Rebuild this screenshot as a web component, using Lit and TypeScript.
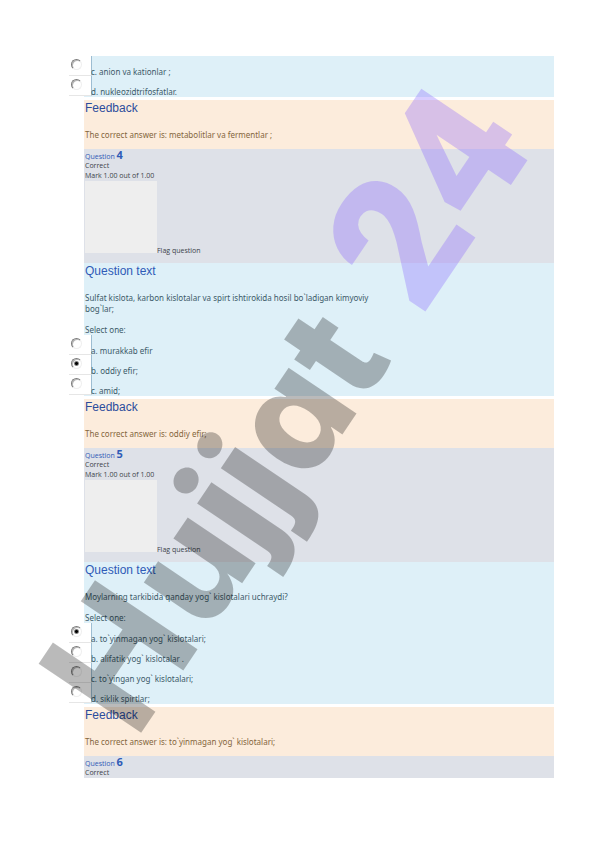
import { LitElement, html, css, nothing } from 'lit';
import { customElement, property } from 'lit/decorators.js';

interface Quiz {
  id: string;
  number?: number;
  text?: string;
  options: string[];
  selected?: number;
  answer?: string;
}

const QUIZ: Quiz[] = [
  {
    id: 'q3',
    options: ['c. anion va kationlar ;', 'd. nukleozidtrifosfatlar.'],
    answer: 'metabolitlar va fermentlar ;',
  },
  {
    id: 'q4',
    number: 4,
    text: 'Sulfat kislota, karbon kislotalar va spirt ishtirokida hosil bo`ladigan kimyoviy bog`lar;',
    options: ['a. murakkab efir', 'b. oddiy efir;', 'c. amid;'],
    selected: 1,
    answer: 'oddiy efir;',
  },
  {
    id: 'q5',
    number: 5,
    text: 'Moylarning tarkibida qanday yog` kislotalari uchraydi?',
    options: [
      'a. to`yinmagan yog` kislotalari;',
      'b. alifatik yog` kislotalar .',
      'c. to`yingan yog` kislotalari;',
      'd. siklik spirtlar;',
    ],
    selected: 0,
    answer: 'to`yinmagan yog` kislotalari;',
  },
  { id: 'q6', number: 6, options: [] },
];

@customElement('quiz-info')
export class QuizInfo extends LitElement {
  @property({ type: Number }) number = 0;
  @property({ type: Boolean }) short = false;

  static styles = css`
    :host {
      display: block;
      background: #dee1e8;
      color: #3c4148;
      font-family: "Open Sans", sans-serif;
      font-size: 7px;
      line-height: 10px;
      padding-left: 1px;
    }
    .title {
      margin: 0;
      height: 12px;
      line-height: 12px;
      font-size: 7px;
      font-weight: normal;
      color: #2f5bb7;
    }
    .number {
      font-size: 11px;
      font-weight: bold;
    }
    .line {
      margin: 0;
    }
    .flag {
      display: flex;
      align-items: flex-end;
      padding-bottom: 10px;
    }
    .picture {
      width: 72px;
      height: 72px;
      background: #eeeeee;
    }
    .flag-text {
      line-height: 5px;
    }
  `;

  render() {
    return html`
      <h3 class="title">Question <span class="number">${this.number}</span></h3>
      <p class="line">Correct</p>
      ${this.short
        ? nothing
        : html`
            <p class="line">Mark 1.00 out of 1.00</p>
            <div class="flag">
              <div class="picture"></div>
              <span class="flag-text">Flag question</span>
            </div>
          `}
    `;
  }
}

@customElement('quiz-question')
export class QuizQuestion extends LitElement {
  @property({ attribute: false }) quiz!: Quiz;

  static styles = css`
    :host {
      display: block;
      background: #def0f8;
      color: #3c5a68;
      padding-bottom: 1px;
    }
    .heading {
      margin: 0 0 13px;
      padding-left: 1px;
      font: 12px/16px "Liberation Sans", Arial, sans-serif;
      color: #2f5bb7;
    }
    .text,
    .select {
      margin: 0;
      padding-left: 1px;
    }
    .text {
      max-width: 300px;
      margin-bottom: 10px;
    }
    .options {
      margin-left: -15px;
    }
    .option {
      display: flex;
      height: 20px;
    }
    .cell {
      box-sizing: border-box;
      width: 23px;
      padding: 3px 0 0 2px;
      background: #fff;
      border-right: 1px solid #9dbdd2;
      border-bottom: 1px solid #e6e6e6;
    }
    .radio {
      appearance: none;
      display: block;
      box-sizing: border-box;
      width: 11px;
      height: 11px;
      margin: 0;
      border: 1px solid;
      border-color: #7c7c7c #efefef #efefef #7c7c7c;
      border-radius: 50%;
      box-shadow: inset 1px 1px 0 #b8b8b8;
    }
    .radio:checked {
      background: radial-gradient(circle, #000 1px, transparent 3px);
    }
    .label {
      align-self: flex-end;
      margin-left: -1px;
      line-height: 9px;
    }
  `;

  render() {
    const { id, text, options, selected } = this.quiz;
    return html`
      ${text
        ? html`
            <h4 class="heading">Question text</h4>
            <p class="text">${text}</p>
            <p class="select">Select one:</p>
          `
        : nothing}
      <div class="options">
        ${options.map(
          (option, i) => html`
            <div class="option">
              <div class="cell">
                <input class="radio" type="radio" name=${id} id="${id}-${i}" ?checked=${i === selected} />
              </div>
              <label class="label" for="${id}-${i}">${option}</label>
            </div>
          `
        )}
      </div>
    `;
  }
}

@customElement('quiz-feedback')
export class QuizFeedback extends LitElement {
  @property() answer = '';

  static styles = css`
    :host {
      display: block;
      background: #fcecdc;
      color: #84663c;
      padding: 0 0 9px 1px;
    }
    .heading {
      margin: 0 0 13px;
      font: 12px/16px "Liberation Sans", Arial, sans-serif;
      color: #2c4c9c;
    }
    .answer {
      margin: 0;
    }
  `;

  render() {
    return html`
      <h4 class="heading">Feedback</h4>
      <p class="answer">The correct answer is: ${this.answer}</p>
    `;
  }
}

@customElement('app-root')
export class AppRoot extends LitElement {
  static styles = css`
    :host {
      display: block;
      position: relative;
      box-sizing: border-box;
      min-height: 100vh;
      overflow: hidden;
      padding: 56px 42px 56px 84px;
      background: #fff;
      font: 8px/11px "Noto Sans", "Open Sans", sans-serif;
    }
    .feedback {
      margin-top: 3px;
    }
    /* stamp across the whole page, turned around the start of its baseline */
    .watermark {
      position: absolute;
      left: 135px;
      top: 596px;
      font: bold 174px/174px Roboto, sans-serif;
      white-space: nowrap;
      color: rgba(0, 0, 0, 0.27);
      transform: rotate(-56deg);
      transform-origin: 0 146px;
      pointer-events: none;
    }
    .lower {
      font-family: Inter, sans-serif;
      font-size: 150px;
      font-weight: 800;
      line-height: 1px;
      margin-left: 6px;
      font-feature-settings: "cv11";
    }
    .accent {
      margin-left: 6px;
      font-size: 180px;
      font-weight: 900;
      line-height: 1px;
      color: rgba(138, 98, 255, 0.32);
    }
  `;

  render() {
    return html`
      ${QUIZ.map(
        (quiz) => html`
          ${quiz.number
            ? html`<quiz-info .number=${quiz.number} ?short=${!quiz.options.length}></quiz-info>`
            : nothing}
          ${quiz.options.length ? html`<quiz-question .quiz=${quiz}></quiz-question>` : nothing}
          ${quiz.answer
            ? html`<quiz-feedback class="feedback" .answer=${quiz.answer}></quiz-feedback>`
            : nothing}
        `
      )}
      <div class="watermark">H<span class="lower">ujjat</span> <span class="accent">24</span></div>
    `;
  }
}
